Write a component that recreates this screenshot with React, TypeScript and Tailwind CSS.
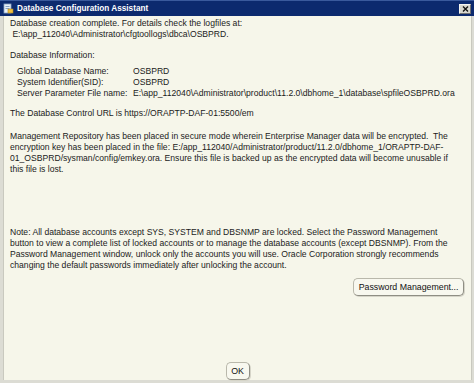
const FONT = "font-['Liberation_Sans',Arial,sans-serif]"

function Line({ children, className = '' }: { children: React.ReactNode; className?: string }) {
  return <div className={`h-[11px] leading-[11px] whitespace-pre ${className}`}>{children}</div>
}

function InfoRow({ label, value, className = '' }: { label: string; value: string; className?: string }) {
  return (
    <div className={`flex h-[11px] leading-[11px] whitespace-pre ${className}`}>
      <span className="w-[123px] shrink-0 pl-[7px]">{label}</span>
      <span>{value}</span>
    </div>
  )
}

function WinButton({ label, className = '' }: { label: string; className?: string }) {
  return (
    <button
      className={`h-[18px] rounded-[5px] border border-[#b9b8ab] border-r-[#8f8e84] border-b-[#8f8e84]
                  bg-[#f8f8ef] text-[8.8px] leading-[16px] text-[#111] shadow-[1px_1px_0_#d6d5c9] ${className}`}
    >
      {label}
    </button>
  )
}

export default function App() {
  return (
    <div className={`w-[474px] h-[383px] flex flex-col bg-[#dcdcd4] text-[8.6px] text-[#1b1b1b] ${FONT}`}>
      {/* 标题栏 */}
      <div className="h-[16px] flex items-center bg-[#0c2a6e] border-t border-[#3a5a9c] pl-[3px] pr-[3px]">
        <svg width="11" height="11" viewBox="0 0 11 11" className="mr-[3px]">
          <rect x="1" y="1" width="7" height="9" fill="#e8f0f8" stroke="#8aa4c4" strokeWidth="0.8" />
          <rect x="2.5" y="3" width="4" height="0.8" fill="#6d8fb8" />
          <rect x="2.5" y="5" width="4" height="0.8" fill="#6d8fb8" />
          <rect x="5" y="6" width="5" height="4" fill="#f0c040" stroke="#b08820" strokeWidth="0.6" />
        </svg>
        <span className="text-white font-bold text-[8.2px] leading-[12px]">Database Configuration Assistant</span>
        <div className="ml-auto w-[12px] h-[10px] bg-[#d8d8d0] border border-[#f4f4f0] border-r-[#707070] border-b-[#707070] flex items-center justify-center">
          <svg width="7" height="6" viewBox="0 0 7 6">
            <path d="M1 0.5 L6 5.5 M6 0.5 L1 5.5" stroke="#111" strokeWidth="1.4" />
          </svg>
        </div>
      </div>

      {/* 内容区 */}
      <div className="flex-1 flex flex-col bg-[#f6f6ea] ml-[3px] mr-[2px] border-l border-r border-[#c9c9bf]">
        <div className="pl-[6px] pt-[2px]">
          <Line>Database creation complete. For details check the logfiles at:</Line>
          <Line> E:\app_112040\Administrator\cfgtoollogs\dbca\OSBPRD.</Line>

          <Line className="mt-[10px]">Database Information:</Line>
          <InfoRow className="mt-[5px]" label="Global Database Name:" value="OSBPRD" />
          <InfoRow label="System Identifier(SID):" value="OSBPRD" />
          <InfoRow label="Server Parameter File name:" value="E:\app_112040\Administrator\product\11.2.0\dbhome_1\database\spfileOSBPRD.ora" />

          <Line className="mt-[9px]">The Database Control URL is https://ORAPTP-DAF-01:5500/em</Line>

          <div className="mt-[12px]">
            <Line>Management Repository has been placed in secure mode wherein Enterprise Manager data will be encrypted.  The</Line>
            <Line>encryption key has been placed in the file: E:/app_112040/Administrator/product/11.2.0/dbhome_1/ORAPTP-DAF-</Line>
            <Line>01_OSBPRD/sysman/config/emkey.ora. Ensure this file is backed up as the encrypted data will become unusable if</Line>
            <Line>this file is lost.</Line>
          </div>

          <div className="mt-[52px]">
            <Line>Note: All database accounts except SYS, SYSTEM and DBSNMP are locked. Select the Password Management</Line>
            <Line>button to view a complete list of locked accounts or to manage the database accounts (except DBSNMP). From the</Line>
            <Line>Password Management window, unlock only the accounts you will use. Oracle Corporation strongly recommends</Line>
            <Line>changing the default passwords immediately after unlocking the account.</Line>
          </div>
        </div>

        <div className="flex justify-end mt-[7px] pr-[7px]">
          <WinButton label="Password Management..." className="w-[111px]" />
        </div>

        <div className="flex-1" />

        <div className="flex justify-center">
          <WinButton label="OK" className="w-[24px] h-[17px]" />
        </div>
      </div>
      <div className="h-[3px]" />
    </div>
  )
}
